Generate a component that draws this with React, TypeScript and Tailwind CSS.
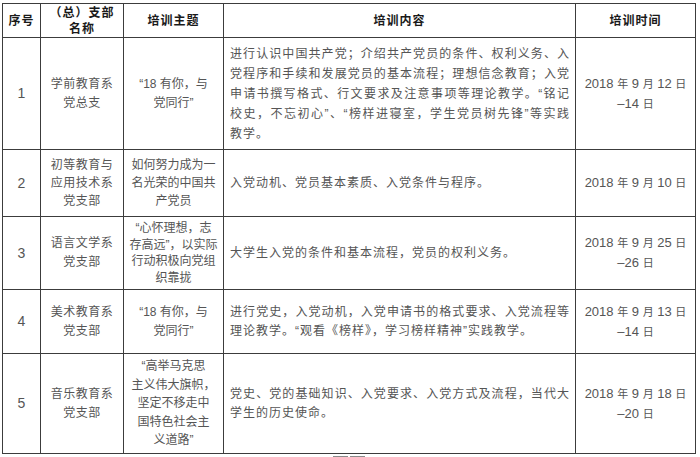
import React from 'react';

type Row = {
  no: string;
  branch: string[];
  branchLeading: string;
  topic: string[];
  topicLeading: string;
  content: string[];
  contentLeading: string;
  justify?: boolean;
  date: [string, string];
};

const ROWS: Row[] = [
  {
    no: '1',
    branch: ['学前教育系', '党总支'],
    branchLeading: 'leading-[19px]',
    topic: ['“18 有你，与', '党同行”'],
    topicLeading: 'leading-[19px]',
    content: [
      '进行认识中国共产党；介绍共产党员的条件、权利义务、入',
      '党程序和手续和发展党员的基本流程；理想信念教育；入党',
      '申请书撰写格式、行文要求及注意事项等理论教学。“铭记',
      '校史，不忘初心”、“榜样进寝室，学生党员树先锋”等实践',
      '教学。',
    ],
    contentLeading: 'leading-[20px]',
    justify: true,
    date: ['12', '14'],
  },
  {
    no: '2',
    branch: ['初等教育与', '应用技术系', '党支部'],
    branchLeading: 'leading-[18px]',
    topic: ['如何努力成为一', '名光荣的中国共', '产党员'],
    topicLeading: 'leading-[18px]',
    content: ['入党动机、党员基本素质、入党条件与程序。'],
    contentLeading: 'leading-[19px]',
    date: ['10', ''],
  },
  {
    no: '3',
    branch: ['语言文学系', '党支部'],
    branchLeading: 'leading-[19px]',
    topic: ['“心怀理想，志', '存高远”，以实际', '行动积极向党组', '织靠拢'],
    topicLeading: 'leading-[16.5px]',
    content: ['大学生入党的条件和基本流程，党员的权利义务。'],
    contentLeading: 'leading-[19px]',
    date: ['25', '26'],
  },
  {
    no: '4',
    branch: ['美术教育系', '党支部'],
    branchLeading: 'leading-[19px]',
    topic: ['“18 有你，与', '党同行”'],
    topicLeading: 'leading-[19px]',
    content: [
      '进行党史，入党动机，入党申请书的格式要求、入党流程等',
      '理论教学。“观看《榜样》，学习榜样精神”实践教学。',
    ],
    contentLeading: 'leading-[19px]',
    justify: true,
    date: ['13', '14'],
  },
  {
    no: '5',
    branch: ['音乐教育系', '党支部'],
    branchLeading: 'leading-[19px]',
    topic: ['“高举马克思', '主义伟大旗帜，', '坚定不移走中', '国特色社会主', '义道路”'],
    topicLeading: 'leading-[18.5px]',
    content: ['党史、党的基础知识、入党要求、入党方式及流程，当代大', '学生的历史使命。'],
    contentLeading: 'leading-[19px]',
    justify: true,
    date: ['18', '20'],
  },
];

const FONT = "font-['Liberation_Sans','Noto_Sans_CJK_SC',sans-serif]";

function Cell({ children, left }: { children: React.ReactNode; left?: boolean }) {
  return (
    <div
      className={
        left
          ? 'flex items-center bg-white pl-[6px] pr-[5px]'
          : 'flex items-center justify-center bg-white text-center'
      }
    >
      {children}
    </div>
  );
}

function Head({ children }: { children: React.ReactNode }) {
  return (
    <Cell>
      <div className="text-[12px] font-bold leading-[16px] tracking-[1px] text-[#1a1a1a]">{children}</div>
    </Cell>
  );
}

function DateText({ day, end }: { day: string; end: string }) {
  return (
    <div className="text-[13px] leading-[19px] text-[#555]">
      <div>
        2018 <span className="text-[11px]">年</span> 9 <span className="text-[11px]">月</span> {day}{' '}
        <span className="text-[11px]">日</span>
      </div>
      {end && (
        <div>
          –{end} <span className="text-[11px]">日</span>
        </div>
      )}
    </div>
  );
}

export default function App() {
  return (
    <div className={`h-[457px] w-[700px] overflow-hidden bg-white pl-[2px] pt-[3px] ${FONT}`}>
      <div className="grid w-[694px] grid-cols-[37px_82px_99px_351px_119px] grid-rows-[33px_111px_66px_72px_63px_99px] gap-px border border-[#3c3c3c] bg-[#3c3c3c]">
        <Head>序号</Head>
        <Head>
          （总）支部
          <br />
          名称
        </Head>
        <Head>培训主题</Head>
        <Head>培训内容</Head>
        <Head>培训时间</Head>

        {ROWS.map((r) => (
          <React.Fragment key={r.no}>
            <Cell>
              <span className="text-[14px] text-[#555]">{r.no}</span>
            </Cell>
            <Cell>
              <div className={`text-[12px] tracking-[0.5px] text-[#555] ${r.branchLeading}`}>
                {r.branch.map((l, i) => (
                  <div key={i}>{l}</div>
                ))}
              </div>
            </Cell>
            <Cell>
              <div className={`text-[12px] tracking-[0px] text-[#555] ${r.topicLeading}`}>
                {r.topic.map((l, i) => (
                  <div key={i} className="whitespace-nowrap">
                    {l}
                  </div>
                ))}
              </div>
            </Cell>
            <Cell left>
              <div className={`w-full text-[12px] tracking-[1px] text-[#555] ${r.contentLeading}`}>
                {r.content.map((l, i) => (
                  <div
                    key={i}
                    className={
                      r.justify && i < r.content.length - 1
                        ? 'whitespace-nowrap [text-align-last:justify]'
                        : 'whitespace-nowrap'
                    }
                  >
                    {l}
                  </div>
                ))}
              </div>
            </Cell>
            <Cell>
              <DateText day={r.date[0]} end={r.date[1]} />
            </Cell>
          </React.Fragment>
        ))}
      </div>
      <div className="ml-[331px] mt-[2px] flex gap-[2px]">
        <div className="h-[2px] w-[15px] bg-[#8a8a8a]" />
        <div className="h-[2px] w-[15px] bg-[#8a8a8a]" />
      </div>
    </div>
  );
}
